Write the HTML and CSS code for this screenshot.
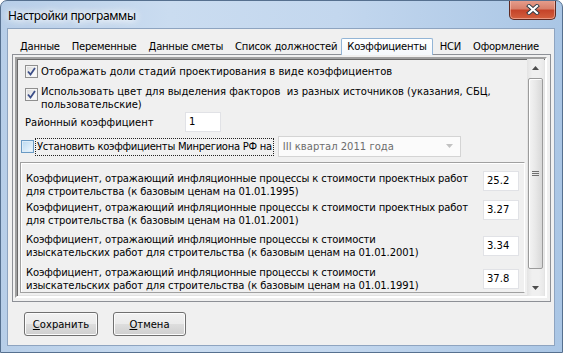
FILE: index.html
```html
<!DOCTYPE html>
<html lang="ru">

<head>
  <meta charset="UTF-8" />
  <title>Настройки программы</title>
  <link rel="stylesheet" href="styles.css">
</head>

<body>

  <div class="window">
    <div class="titlebar">
      <div class="title">Настройки программы</div>
      <div class="close-btn">
        <svg width="14" height="11" viewBox="0 0 14 11">
          <path d="M3 2 L11 9 M11 2 L3 9" stroke="#2f3a44" stroke-width="4" stroke-linecap="square" />
          <path d="M3 2 L11 9 M11 2 L3 9" stroke="#fff" stroke-width="2.2" stroke-linecap="square" />
        </svg>
      </div>
    </div>

    <div class="client">
      <div class="tabs">
        <span class="tab">Данные</span>
        <span class="tab">Переменные</span>
        <span class="tab">Данные сметы</span>
        <span class="tab">Список должностей</span>
        <span class="tab active">Коэффициенты</span>
        <span class="tab">НСИ</span>
        <span class="tab">Оформление</span>
      </div>

      <div class="tab-panel">
        <div class="scroll-box">
          <div class="scroll-content">
            <div class="options">
              <div class="check-row">
                <span class="check checked"><svg width="9" height="9" viewBox="0 0 9 9"><path d="M1 4.5 L3.5 7.5 L8 1" fill="none" stroke="#3d4f88" stroke-width="1.8" /></svg></span>
                <span>Отображать доли стадий проектирования в виде коэффициентов</span>
              </div>
              <div class="check-row two-lines">
                <span class="check checked"><svg width="9" height="9" viewBox="0 0 9 9"><path d="M1 4.5 L3.5 7.5 L8 1" fill="none" stroke="#3d4f88" stroke-width="1.8" /></svg></span>
                <span>Использовать цвет для выделения факторов&nbsp; из разных источников (указания, СБЦ,<br>пользовательские)</span>
              </div>
              <div class="field-row">
                <span class="field-label">Районный коэффициент</span>
                <span class="field">1</span>
              </div>
              <div class="region-row">
                <span class="check hot"></span>
                <span class="focus-label">Установить коэффициенты Минрегиона РФ на</span>
                <span class="combo">
                  <span>III квартал 2011 года</span>
                  <svg width="8" height="5" viewBox="0 0 8 5"><path d="M0 0 H7 L3.5 4 Z" fill="#c2c2c2" /></svg>
                </span>
              </div>
            </div>

            <div class="coef-group">
              <div class="coef-row">
                <span class="coef-text">Коэффициент, отражающий инфляционные процессы к стоимости проектных работ<br>для строительства (к базовым ценам на 01.01.1995)</span>
                <span class="field">25.2</span>
              </div>
              <div class="coef-row second">
                <span class="coef-text">Коэффициент, отражающий инфляционные процессы к стоимости проектных работ<br>для строительства (к базовым ценам на 01.01.2001)</span>
                <span class="field">3.27</span>
              </div>
              <div class="coef-row mid third">
                <span class="coef-text">Коэффициент, отражающий инфляционные процессы к стоимости<br>изыскательских работ для строительства (к базовым ценам на 01.01.2001)</span>
                <span class="field">3.34</span>
              </div>
              <div class="coef-row mid fourth">
                <span class="coef-text">Коэффициент, отражающий инфляционные процессы к стоимости<br>изыскательских работ для строительства (к базовым ценам на 01.01.1991)</span>
                <span class="field">37.8</span>
              </div>
            </div>
          </div>

          <div class="scrollbar">
            <div class="sb-arrow"><svg width="7" height="4" viewBox="0 0 7 4"><path d="M3.5 0 L7 4 H0 Z" fill="#4d4d4d" /></svg></div>
            <div class="sb-thumb"><span class="grip"></span></div>
            <div class="sb-arrow down"><svg width="7" height="4" viewBox="0 0 7 4"><path d="M0 0 H7 L3.5 4 Z" fill="#4d4d4d" /></svg></div>
          </div>
        </div>
      </div>

      <div class="buttons">
        <button class="btn"><u>С</u>охранить</button>
        <button class="btn"><u>О</u>тмена</button>
      </div>
    </div>
  </div>

</body>

</html>
```

FILE: styles.css
```css
body {
  margin: 0;
  font-family: 'DejaVu Sans', sans-serif;
  font-size: 10px;
  color: #000;
  background: #fff;
}

.window {
  width: 563px;
  height: 353px;
  box-sizing: border-box;
  border: 1px solid #56708f;
  border-radius: 7px 7px 0 0;
  background: linear-gradient(90deg, #b7cee8 0%, #cadcf0 30%, #c3d7ee 60%, #aac6e5 100%);
  display: flex;
  flex-direction: column;
  overflow: hidden;
}

.titlebar {
  height: 27px;
  display: flex;
  align-items: flex-start;
  flex-shrink: 0;
}

.title {
  font-family: 'Noto Sans', sans-serif;
  font-size: 12px;
  letter-spacing: -0.35px;
  margin: 7px 0 0 7px;
  line-height: 16px;
  text-shadow: 0 0 6px #fff, 0 0 10px #fff, 0 0 12px #fff;
}

.close-btn {
  margin: -1px 6px 0 auto;
  width: 47px;
  height: 20px;
  box-sizing: border-box;
  border: 1px solid #5e2a22;
  border-top: none;
  border-radius: 0 0 5px 5px;
  background: linear-gradient(#e7a08f 0%, #d8806b 45%, #c5442a 55%, #d3603f 100%);
  box-shadow: inset 0 0 0 1px rgba(255, 210, 200, .5);
  display: flex;
  align-items: center;
  justify-content: center;
}

.client {
  margin: 0 7px 6px 6px;
  flex: 1;
  background: #f0f0f0;
  border: 1px solid #8ea4c0;
  display: flex;
  flex-direction: column;
}

/* вкладки */
.tabs {
  height: 25px;
  display: flex;
  align-items: flex-end;
  padding-left: 6px;
  flex-shrink: 0;
}

.tab {
  padding: 0 6px;
  line-height: 14px;
  letter-spacing: -0.22px;
  white-space: nowrap;
}

.tab.active {
  position: relative;
  margin: 0 1px -1px -2px;
  padding: 1px 5px 1px 5px;
  border: 1px solid #93b5d6;
  border-bottom: none;
  border-radius: 2px 2px 0 0;
  background: linear-gradient(#ffffff, #f4f8fc);
}

.tab-panel {
  margin: 0 3px 0 4px;
  height: 248px;
  box-sizing: border-box;
  border: 1px solid #8d9096;
  padding: 2px 3px 3px 2px;
  background: #f0f0f0;
}

.scroll-box {
  height: 100%;
  box-sizing: border-box;
  border: 2px solid;
  border-color: #a0a0a0 #fff #fff #a0a0a0;
  box-shadow: inset 1px 1px 0 #696969, inset -1px -1px 0 #e3e3e3;
  display: flex;
  padding: 0 1px 0 0;
}

.scroll-content {
  flex: 1;
  overflow: hidden;
  padding-top: 6px;
}

.options {
  padding-left: 8px;
  display: flex;
  flex-direction: column;
}

.check-row {
  display: flex;
  align-items: flex-start;
  gap: 3px;
  line-height: 13px;
}

.check-row.two-lines {
  margin-top: 7px;
}

.check-row.two-lines .check {
  margin-top: 3px;
}

.check {
  width: 13px;
  height: 13px;
  box-sizing: border-box;
  border: 1px solid #8f8f8f;
  background: linear-gradient(135deg, #d6d6d6, #f8f8f8 70%);
  box-shadow: inset 0 0 0 1px #f4f4f4;
  display: flex;
  align-items: center;
  justify-content: center;
  flex-shrink: 0;
}

.check.hot {
  border-color: #6a9ac4;
  background: linear-gradient(135deg, #b9d8f0, #e6f3fc 80%);
  box-shadow: inset 0 0 0 1px #dcecf8;
}

.field-row {
  margin-top: 1px;
  display: flex;
  align-items: center;
  height: 20px;
}

.field-label {
  width: 160px;
}

.field {
  width: 36px;
  height: 20px;
  box-sizing: border-box;
  background: #fff;
  border: 1px solid #e1e2e6;
  padding-left: 3px;
  line-height: 18px;
  flex-shrink: 0;
}

.region-row {
  margin: 4px 0 0 -4px;
  height: 21px;
  display: flex;
  align-items: center;
}

.focus-label {
  margin-left: 2px;
  padding: 1px 1px 2px 1px;
  outline: 1px dotted #222;
  line-height: 13px;
  letter-spacing: -0.28px;
}

.combo {
  margin-left: 5px;
  width: 183px;
  height: 21px;
  box-sizing: border-box;
  border: 1px solid #d4d4d4;
  background: #fbfbfb;
  color: #6d6d6d;
  display: flex;
  align-items: center;
  justify-content: space-between;
  padding: 0 6px 0 4px;
}

/* группа коэффициентов */
.coef-group {
  margin: 5px 2px 0 3px;
  border: 1px solid #a0a0a0;
  border-right-color: #fff;
  box-shadow: inset 1px 1px 0 #fff;
  padding: 8px 5px 0 5px;
}

.coef-row {
  display: flex;
  align-items: flex-start;
  justify-content: space-between;
  line-height: 13px;
}

.coef-row .coef-text {
  margin-top: 1px;
  letter-spacing: -0.12px;
}

.coef-row.second {
  margin-top: 2px;
}

.coef-row.mid {
  align-items: center;
}

.coef-row.mid .coef-text {
  margin-top: 0;
}

.coef-row.third {
  margin-top: 6px;
}

.coef-row.fourth {
  margin-top: 7px;
}

/* полоса прокрутки */
.scrollbar {
  width: 17px;
  flex-shrink: 0;
  display: flex;
  flex-direction: column;
  background: linear-gradient(90deg, #e3e3e3, #f0f0f0 30%, #f0f0f0 70%, #e8e8e8);
}

.sb-arrow {
  height: 17px;
  display: flex;
  align-items: center;
  justify-content: center;
}

.sb-arrow.down {
  margin-top: auto;
}

.sb-thumb {
  margin: 2px 1px 0 1px;
  height: 191px;
  box-sizing: border-box;
  border: 1px solid #9b9b9b;
  border-radius: 2px;
  background: linear-gradient(90deg, #f4f4f4, #e8e8e8 50%, #d8d8d8);
  box-shadow: inset 1px 1px 0 #fff;
  display: flex;
  align-items: center;
  justify-content: center;
}

.grip {
  width: 7px;
  height: 5px;
  background: repeating-linear-gradient(#6f6f6f 0 1px, transparent 1px 2px);
}

/* кнопки */
.buttons {
  display: flex;
  gap: 15px;
  padding: 10px 0 0 16px;
}

.btn {
  width: 74px;
  height: 24px;
  font-family: 'DejaVu Sans', sans-serif;
  font-size: 10px;
  color: #000;
  border: 1px solid #707070;
  border-radius: 3px;
  background: linear-gradient(#f2f2f2 0%, #ebebeb 48%, #dddddd 52%, #cfcfcf 100%);
  box-shadow: inset 0 0 0 1px #fcfcfc;
  padding: 0;
}

.btn + .btn {
  width: 73px;
}
```
